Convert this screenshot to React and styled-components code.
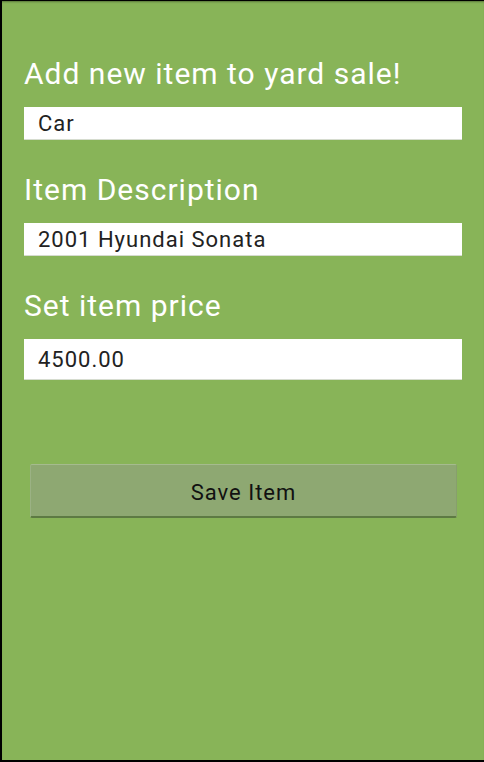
import { createGlobalStyle, styled } from "styled-components";

const GlobalStyle = createGlobalStyle`
  html, body {
    margin: 0;
    padding: 0;
    background: #000;
  }
  * {
    box-sizing: border-box;
  }
`;

const Screen = styled.div`
  width: 484px;
  height: 762px;
  background-color: #88b458;
  border-left: 2px solid #000;
  border-top: 1px solid #000;
  border-bottom: 2px solid #000;
  box-shadow: inset 0 2px 2px -1px rgba(0, 0, 0, 0.35);
  padding: 55px 22px 0 22px;
  font-family: Roboto, "Noto Sans", sans-serif;
  display: flex;
  flex-direction: column;
`;

const Heading = styled.h2`
  margin: 0 0 15px 0;
  font-size: 30px;
  line-height: 36px;
  letter-spacing: 1px;
  font-weight: 400;
  color: #fff;
  margin-top: ${(props) => (props.first ? "0" : "32px")};
`;

const Field = styled.input`
  width: 100%;
  height: ${(props) => (props.tall ? "41px" : "33px")};
  border: none;
  border-bottom: 1px solid #d6dccf;
  background: #fff;
  padding: 1px 0 0 14px;
  margin: 0;
  font-family: Roboto, "Noto Sans", sans-serif;
  font-size: 22px;
  letter-spacing: 1px;
  color: #222;
  outline: none;
`;

const SaveButton = styled.button`
  margin: 84px 5px 0 6px;
  height: 54px;
  background-color: #8ea872;
  border: none;
  border-top: 1px solid #a5bb8e;
  border-bottom: 2px solid #5d7a43;
  border-left: 1px solid #9bb284;
  border-right: 1px solid #879f6c;
  border-radius: 2px;
  font-family: Roboto, "Noto Sans", sans-serif;
  font-size: 22px;
  letter-spacing: 1px;
  color: #111;
  padding: 3px 0 0 0;
`;

const App = () => {
  return (
    <>
      <GlobalStyle />
      <Screen>
        <Heading first>Add new item to yard sale!</Heading>
        <Field defaultValue="Car" />
        <Heading>Item Description</Heading>
        <Field defaultValue="2001 Hyundai Sonata" />
        <Heading>Set item price</Heading>
        <Field tall defaultValue="4500.00" />
        <SaveButton>Save Item</SaveButton>
      </Screen>
    </>
  );
};

export default App;
